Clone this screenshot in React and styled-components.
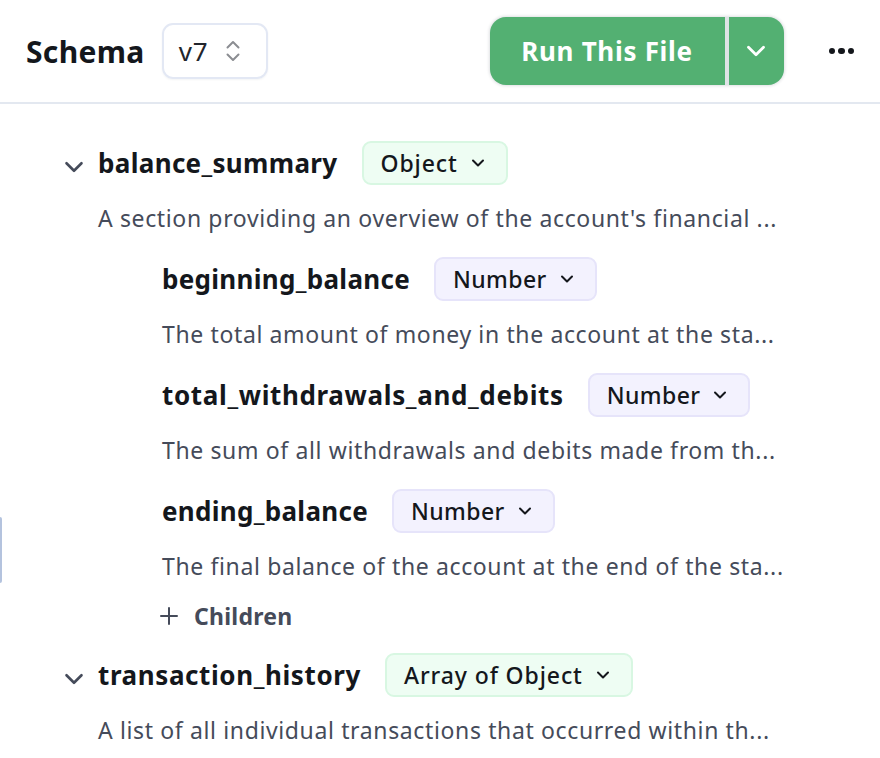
import React from "react";
import styled, { createGlobalStyle } from "styled-components";

const GlobalStyle = createGlobalStyle`
  html, body {
    margin: 0;
    padding: 0;
    background: #fff;
  }
  body {
    font-family: "Noto Sans", "Open Sans", sans-serif;
    color: #14171c;
  }
`;

const Chevron = ({ size = 16, width = 2, color = "currentColor" }) => (
  <svg width={size} height={size} viewBox="0 0 16 16" fill="none" stroke={color} strokeWidth={width} strokeLinecap="round" strokeLinejoin="round">
    <path d="M4 6l4 4 4-4" />
  </svg>
);

const ChevronUpDown = () => (
  <svg width="18" height="24" viewBox="0 0 18 24" fill="none" stroke="#8b8d92" strokeWidth="2" strokeLinecap="round" strokeLinejoin="round">
    <path d="M3.5 8.5L9 3l5.500 5.500" />
    <path d="M3.500 15.500L9 21l5.500-5.500" />
  </svg>
);

const Fields = [
  { name: "beginning_balance", desc: "The total amount of money in the account at the sta...", tracking: 0.3 },
  { name: "total_withdrawals_and_debits", desc: "The sum of all withdrawals and debits made from th...", tracking: 0.65 },
  { name: "ending_balance", desc: "The final balance of the account at the end of the sta...", tracking: 0.3 },
];

const App = () => {
  return (
    <Page>
      <GlobalStyle />
      <ResizeTab />
      <Header>
        <Title>Schema</Title>
        <VersionSelect>
          <span>v7</span>
          <ChevronUpDown />
        </VersionSelect>
        <Actions>
          <RunGroup>
            <RunButton>Run This File</RunButton>
            <RunMenu><Chevron size={30} width={1.5} /></RunMenu>
          </RunGroup>
          <MoreButton>
            <Dot /><Dot /><Dot />
          </MoreButton>
        </Actions>
      </Header>

      <Content>
        <Field>
          <NameRow>
            <Toggle><Chevron size={30} width={1.4} color="#454b5a" /></Toggle>
            <FieldName $tracking={0.33}>balance_summary</FieldName>
            <TypeBadge $kind="object">Object<Chevron size={20} width={1.6} /></TypeBadge>
          </NameRow>
          <Description>A section providing an overview of the account's financial ...</Description>
        </Field>

        <Children>
          {Fields.map((f) => (
            <Field key={f.name}>
              <NameRow>
                <FieldName $tracking={f.tracking}>{f.name}</FieldName>
                <TypeBadge $kind="number">Number<Chevron size={20} width={1.6} /></TypeBadge>
              </NameRow>
              <Description>{f.desc}</Description>
            </Field>
          ))}
          <AddChildren>
            <svg width="20" height="20" viewBox="0 0 20 20" fill="none" stroke="#454b5a" strokeWidth="2" strokeLinecap="round">
              <path d="M10 2v16M2 10h16" />
            </svg>
            Children
          </AddChildren>
        </Children>

        <Field>
          <NameRow>
            <Toggle><Chevron size={30} width={1.4} color="#454b5a" /></Toggle>
            <FieldName $tracking={0.6}>transaction_history</FieldName>
            <TypeBadge $kind="object">Array of Object<Chevron size={20} width={1.6} /></TypeBadge>
          </NameRow>
          <Description>A list of all individual transactions that occurred within th...</Description>
        </Field>
      </Content>
    </Page>
  );
};

const Page = styled.div`
  position: relative;
  width: 880px;
  height: 758px;
  overflow: hidden;
  background: #fff;
`;

const ResizeTab = styled.div`
  position: absolute;
  left: 0;
  top: 517px;
  width: 2px;
  height: 66px;
  background: #b4c3de;
  border-radius: 0 2px 2px 0;
`;

const Header = styled.div`
  display: flex;
  align-items: center;
  height: 102px;
  padding: 0 26px;
  border-bottom: 2px solid #e3e8f0;
`;

const Title = styled.div`
  font-size: 30px;
  font-weight: 700;
  letter-spacing: 0.33px;
  color: #14171c;
`;

const VersionSelect = styled.div`
  display: flex;
  align-items: center;
  gap: 15px;
  box-sizing: border-box;
  width: 106px;
  height: 56px;
  margin-left: 17px;
  margin-top: -1px;
  padding-left: 15px;
  border: 2px solid #e3e8f4;
  border-radius: 11px;
  font-size: 26px;
  letter-spacing: 1px;
  color: #22252b;
  box-shadow: 0 1px 2px rgba(20, 30, 60, 0.05);
`;

const Actions = styled.div`
  display: flex;
  align-items: center;
  margin-left: auto;
`;

const RunGroup = styled.div`
  display: flex;
  height: 68px;
  margin-top: -1px;
  border-radius: 16px;
  overflow: hidden;
  gap: 4px;
  background: #dfe3e6;
  box-shadow: 0 0 3px 1px rgba(30, 40, 60, 0.14);
`;

const RunButton = styled.div`
  display: flex;
  align-items: center;
  justify-content: center;
  width: 235px;
  background: #53b072;
  color: #fff;
  font-size: 26px;
  font-weight: 700;
  letter-spacing: 0.7px;
`;

const RunMenu = styled.div`
  display: flex;
  align-items: center;
  justify-content: center;
  width: 55px;
  background: #53b072;
  color: #fff;
`;

const MoreButton = styled.div`
  display: flex;
  align-items: center;
  gap: 3px;
  margin-left: 45px;
`;

const Dot = styled.span`
  width: 6.5px;
  height: 6.5px;
  border-radius: 50%;
  background: #14171c;
`;

const Content = styled.div`
  display: flex;
  flex-direction: column;
  padding: 37px 0 0 98px;
`;

const Field = styled.div`
  display: flex;
  flex-direction: column;
  margin-bottom: 23px;
`;

const Children = styled.div`
  display: flex;
  flex-direction: column;
  padding-left: 64px;
`;

const NameRow = styled.div`
  position: relative;
  display: flex;
  align-items: center;
  gap: 24px;
  height: 44px;
`;

const Toggle = styled.span`
  position: absolute;
  left: -39px;
  top: 11px;
  display: flex;
`;

const FieldName = styled.div`
  font-size: 26px;
  font-weight: 700;
  letter-spacing: ${(p) => p.$tracking}px;
  color: #14171c;
`;

const TypeBadge = styled.div`
  display: flex;
  align-items: center;
  gap: 10px;
  box-sizing: border-box;
  height: 44px;
  padding: 0 18px 0 17px;
  border-radius: 9px;
  font-size: 23px;
  font-weight: 500;
  letter-spacing: ${(p) => (p.$kind === "object" ? "0.9px" : "0.4px")};
  color: #14171c;
  background: ${(p) => (p.$kind === "object" ? "#eefdf3" : "#f3f2fe")};
  border: 2px solid ${(p) => (p.$kind === "object" ? "#d8f7e2" : "#e6e4fa")};
`;

const Description = styled.div`
  margin-top: 17px;
  height: 32px;
  line-height: 32px;
  font-size: 23px;
  letter-spacing: 0.63px;
  color: #454b5a;
  white-space: nowrap;
`;

const AddChildren = styled.div`
  display: flex;
  align-items: center;
  gap: 15px;
  height: 32px;
  margin-top: -5px;
  margin-bottom: 21px;
  margin-left: -3px;
  font-size: 23px;
  font-weight: 700;
  letter-spacing: 0.25px;
  color: #454b5a;
`;

export default App;
